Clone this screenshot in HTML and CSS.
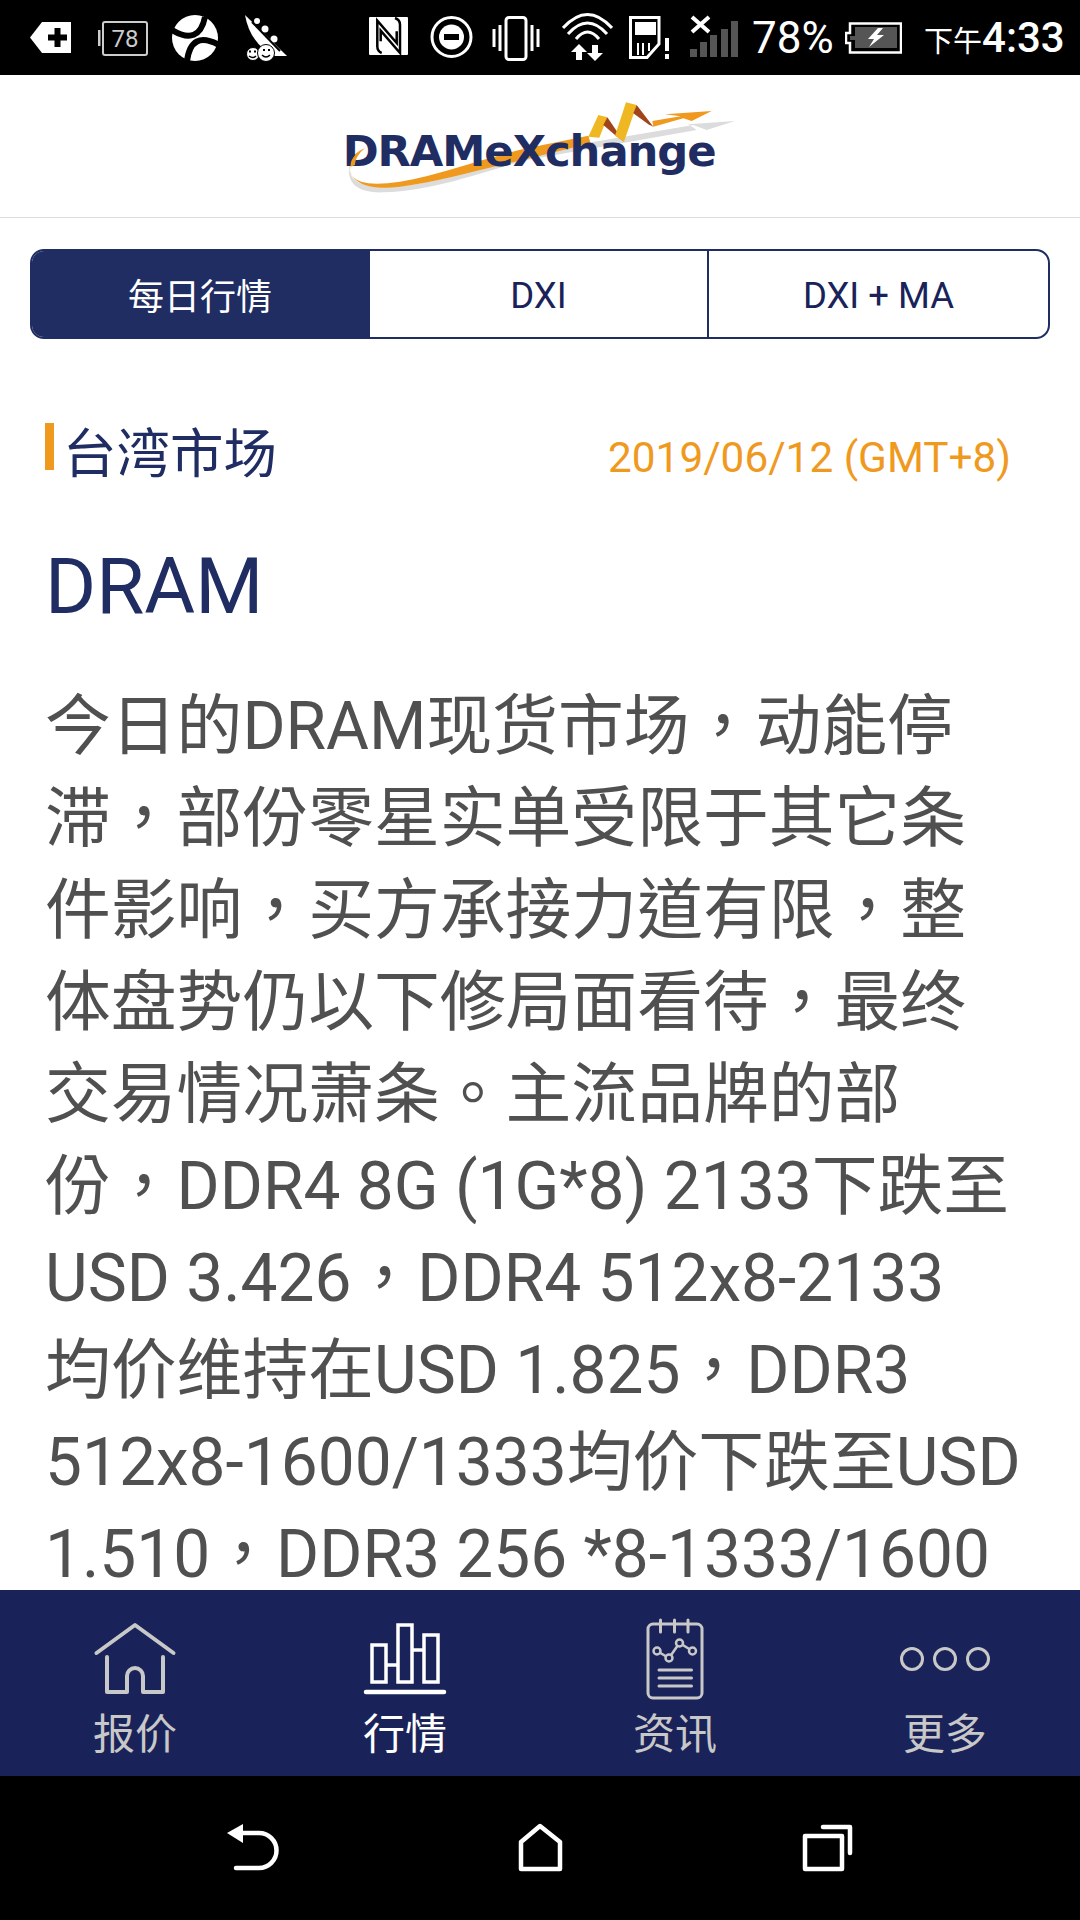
FILE: index.html
```html
<!DOCTYPE html>
<html lang="zh-TW">
<head>
    <meta charset="UTF-8">
    <meta name="viewport" content="width=device-width, initial-scale=1.0">
    <title>DRAMeXchange</title>
    <link rel="stylesheet" href="styles.css">
</head>
<body>
    <!-- Android status bar -->
    <div class="status-bar">
        <svg class="st st-tag" width="41" height="75" viewBox="0 0 41 75"><path d="M0 37.5 12 22H41V53H12Z" fill="#fff"/><path d="M18 37.5H37M27.5 28V47" stroke="#000" stroke-width="6"/></svg>
        <svg class="st st-num" width="50" height="75" viewBox="0 0 50 75"><rect x="5" y="22" width="44" height="33" rx="2" fill="none" stroke="#ccc" stroke-width="2"/><rect x="0" y="30" width="2.5" height="16" fill="#ccc"/><text x="27" y="47" class="st-num-text">78</text></svg>
        <svg class="st st-ball" width="48" height="75" viewBox="0 0 48 75"><circle cx="24" cy="38" r="23" fill="#fff"/><path d="M34 17Q28 46 1 30M48 45Q20 30 16 61" fill="none" stroke="#000" stroke-width="6"/></svg>
        <svg class="st st-pod" width="44" height="75" viewBox="0 0 44 75"><path d="M1 15 43 56H31Q6 44 1 15Z" fill="#fff"/><circle cx="13" cy="21" r="3" fill="#fff"/><circle cx="21" cy="29" r="3.500" fill="#fff"/><circle cx="30" cy="39" r="3.500" fill="#fff"/><path d="M8 22 36 51" stroke="#000" stroke-width="2"/><circle cx="9" cy="54" r="6.500" fill="#fff" stroke="#000"/><circle cx="22" cy="53" r="8.500" fill="#fff" stroke="#000"/><path d="M5 51.500H7M10 51.500H12M19 50H21M24 50H26" stroke="#000" stroke-width="2"/><path d="M18 55Q22 59 26 55M5 56Q9 59 12 56" fill="none" stroke="#000" stroke-width="1.500"/></svg>
        <svg class="st st-nfc" width="40" height="75" viewBox="0 0 40 75"><rect x="1" y="17" width="39" height="38" rx="1" fill="#fff"/><path d="M13.700 53Q9.300 51.300 9.300 46.300V20.700L28.700 43V31.300M27 18Q32 19.700 32 24.700V53L12.700 30.700V41.300" fill="none" stroke="#000" stroke-width="2.500"/></svg>
        <svg class="st st-dnd" width="43" height="75" viewBox="0 0 43 75"><circle cx="21.500" cy="37" r="19.500" fill="none" stroke="#fff" stroke-width="3"/><circle cx="21.500" cy="37" r="12.500" fill="#fff"/><rect x="14" y="34" width="15" height="6" fill="#000"/></svg>
        <svg class="st st-vib" width="48" height="75" viewBox="0 0 48 75"><rect x="14" y="17.500" width="20" height="42" rx="3" fill="none" stroke="#fff" stroke-width="3"/><path d="M2 29V47M8 25V51M40 25V51M46 29V47" stroke="#fff" stroke-width="3"/></svg>
        <svg class="st st-wifi" width="51" height="75" viewBox="0 0 51 75"><path d="M1 28Q25.500 1 50 28M6 34Q25.500 12 45 34M14 39Q25.500 25 37 39" fill="none" stroke="#fff" stroke-width="3"/><path d="M17 44 25 52H20V60H14V52H9ZM30 45H36V53H41L33 61 25 53H30Z" fill="#fff"/></svg>
        <svg class="st st-sim" width="42" height="75" viewBox="0 0 42 75"><path d="M1.500 17.500H30V44L18 57.500H1.500Z" fill="none" stroke="#fff" stroke-width="3"/><rect x="6" y="22" width="21" height="13" fill="#fff"/><path d="M9 43V55M14 43V55M20 43V51" stroke="#fff" stroke-width="2"/><path d="M38 38V51M38 54V59" stroke="#fff" stroke-width="4"/></svg>
        <svg class="st st-sig" width="48" height="75" viewBox="0 0 48 75"><path d="M0 49H7V57H0ZM10 42H17V57H10ZM20 35H27V57H20ZM31 29H38V57H31ZM41 21H48V57H41Z" fill="#555"/><path d="M2 17 19 32M19 17 2 32" stroke="#fff" stroke-width="4"/></svg>
        <div class="st-pct">78%</div>
        <svg class="st st-bat" width="57" height="75" viewBox="0 0 57 75"><path d="M5 23.500H56V52.500H5V43H1V33H5Z" fill="none" stroke="#fff" stroke-width="2.500"/><path d="M10 27H52V48H10V40H5V36H10Z" fill="#555"/><path d="M33 28 23 39H29L24 47 39 35H32L38 28Z" fill="#fff"/></svg>
        <div class="st-time"><span class="st-ampm">下午</span>4:33</div>
    </div>

    <!-- Logo -->
    <div class="logo-bar">
        <svg width="440" height="125" viewBox="0 0 1320 375">
            <path d="M88 240C78 300 120 325 190 322 350 315 470 265 620 225L1130 135 1105 118 1245 108 1160 135 1120 120 620 205C460 250 340 305 190 305 120 305 85 285 88 240Z" fill="#dcdcdc"/>
            <path d="M135 190C95 210 82 250 95 270 115 300 170 300 240 290 360 270 470 225 620 190L805 152 812 175 620 222C470 255 360 290 240 305 170 314 100 305 90 255 85 225 105 200 135 190Z" fill="#ef9a1f"/>
            <path d="M805 155 835 90 862 97 838 158Z" fill="#efb722"/>
            <path d="M862 97 912 170 885 150 850 120Z" fill="#a2441a"/>
            <path d="M885 152 918 52 950 60 912 170Z" fill="#efb722"/>
            <path d="M950 60 1000 125 985 118 940 85Z" fill="#a2441a"/>
            <path d="M997 108 1082 94 1035 88 1175 78 1115 108 1090 100 1000 125Z" fill="#ef9a1f"/>
            <text x="68" y="243" class="logo-text" textLength="1122">DRAMeXchange</text>
            <path d="M135 190C105 205 90 225 92 245L105 240C105 225 115 205 135 190Z" fill="#ef9a1f"/>
        </svg>
    </div>

    <div class="content">
        <div class="tabs">
            <div class="tab tab-active">每日行情</div>
            <div class="tab tab-mid">DXI</div>
            <div class="tab">DXI + MA</div>
        </div>

        <div class="market-row">
            <div class="market-name">台湾市场</div>
            <div class="market-date">2019/06/12 (GMT+8)</div>
        </div>

        <h1 class="product">DRAM</h1>
        <p class="report">今日的DRAM现货市场，动能停<br>滞，部份零星实单受限于其它条<br>件影响，买方承接力道有限，整<br>体盘势仍以下修局面看待，最终<br>交易情况萧条。主流品牌的部<br>份，DDR4 8G (1G*8) 2133下跌至<br>USD 3.426，DDR4 512x8-2133<br>均价维持在USD 1.825，DDR3<br>512x8-1600/1333均价下跌至USD<br>1.510，DDR3 256 *8-1333/1600</p>
    </div>

    <!-- Bottom tabs -->
    <div class="nav">
        <div class="nav-item">
            <svg width="100" height="84" viewBox="0 0 100 84" fill="none" stroke="currentColor" stroke-width="4" stroke-linecap="round" stroke-linejoin="round"><path d="M11.500 35 50 7 88.500 35"/><path d="M22 39V74H42V58A8 8 0 0 1 58 58V74H78V39"/></svg>
            <span>报价</span>
        </div>
        <div class="nav-item nav-active">
            <svg width="100" height="84" viewBox="0 0 100 84" fill="none" stroke="currentColor" stroke-width="4" stroke-linecap="round"><path d="M11 74H89" stroke-width="4.500"/><path d="M17 27H31V64H17ZM43 7H57V64H43ZM69 17H83V64H69ZM31 47H43M57 32H69" stroke-width="3.500"/></svg>
            <span>行情</span>
        </div>
        <div class="nav-item">
            <svg width="100" height="84" viewBox="0 0 100 84" fill="none" stroke="currentColor" stroke-width="3" stroke-linecap="round"><rect x="23" y="6" width="54" height="74" rx="5"/><path d="M35.500 2V14M49.500 2V14M63 2V14"/><path d="M34 52H66.500M34 60H66.500M34 68H66.500"/><path d="M32 33 44 40 54.500 25 67.500 33" stroke-width="2.500"/><g fill="#1a2359" stroke-width="2.500"><circle cx="32" cy="33" r="3.500"/><circle cx="44" cy="40" r="3.500"/><circle cx="54.500" cy="25" r="3.500"/><circle cx="67.500" cy="33" r="3.500"/></g></svg>
            <span>资讯</span>
        </div>
        <div class="nav-item">
            <svg width="100" height="84" viewBox="0 0 100 84" fill="none" stroke="currentColor" stroke-width="3"><circle cx="17" cy="41" r="10.500"/><circle cx="50" cy="41" r="10.500"/><circle cx="83" cy="41" r="10.500"/></svg>
            <span>更多</span>
        </div>
    </div>

    <!-- Android soft keys -->
    <div class="softkeys">
        <svg width="60" height="60" viewBox="0 0 60 60" fill="none" stroke="#fff" stroke-width="4.500" stroke-linecap="round"><path d="M5 15 21 6V25Z" fill="#fff" stroke="none"/><path d="M21 15H37A17.500 17.500 0 0 1 37 50H14"/></svg>
        <svg width="60" height="60" viewBox="0 0 60 60" fill="none" stroke="#fff" stroke-width="4.500" stroke-linejoin="round"><path d="M30 8 11 24V51H50V24Z"/></svg>
        <svg width="60" height="60" viewBox="0 0 60 60" fill="none" stroke="#fff" stroke-width="4.500" stroke-linecap="round" stroke-linejoin="round"><rect x="7" y="18" width="37" height="33"/><path d="M25 9H52V35"/></svg>
    </div>
</body>
</html>
```

FILE: styles.css
```css
/* General styles */
html, body {
    margin: 0;
    padding: 0;
}

body {
    width: 1080px;
    height: 1920px;
    overflow: hidden;
    display: flex;
    flex-direction: column;
    background-color: #ffffff;
    font-family: Roboto, "Noto Sans CJK TC", sans-serif;
}

/* Status bar */
.status-bar {
    height: 75px;
    flex: none;
    display: flex;
    align-items: center;
    padding-left: 30px;
    background-color: #000000;
    color: #ffffff;
}

.st {
    flex: none;
    display: block;
}

.st-num { margin-left: 27px; }
.st-ball { margin-left: 23px; }
.st-pod { margin-left: 25px; }
.st-nfc { margin-left: 80px; }
.st-dnd { margin-left: 22px; }
.st-vib { margin-left: 19px; }
.st-wifi { margin-left: 22px; }
.st-sim { margin-left: 16px; }
.st-sig { margin-left: 19px; }
.st-bat { margin-left: 14px; }

.st-num-text {
    font-family: Roboto, sans-serif;
    font-size: 24px;
    fill: #cccccc;
    text-anchor: middle;
}

.st-pct {
    margin-left: 14px;
    width: 79px;
    font-size: 44px;
}

.st-time {
    margin-left: 22px;
    font-size: 42px;
    font-weight: 500;
    white-space: nowrap;
}

.st-ampm {
    font-size: 29px;
    font-weight: 400;
}

/* Logo */
.logo-bar {
    height: 143px;
    flex: none;
    display: flex;
    justify-content: center;
    padding-top: 10px;
    box-sizing: border-box;
    border-bottom: 1px solid #dddddd;
}

.logo-text {
    font-family: "DejaVu Sans", sans-serif;
    font-weight: 700;
    font-size: 130px;
    fill: #1f2d63;
}

/* Main content */
.content {
    flex: 1;
    min-height: 0;
    overflow: hidden;
    padding: 31px 30px 0;
}

.tabs {
    display: flex;
    height: 90px;
    box-sizing: border-box;
    border: 2px solid #1f2d63;
    border-radius: 14px;
    overflow: hidden;
}

.tab {
    flex: 1;
    display: flex;
    align-items: center;
    justify-content: center;
    padding-top: 3px;
    font-size: 36.5px;
    color: #1a2359;
    border-left: 2px solid #1f2d63;
}

.tab-active {
    flex: none;
    width: 336px;
    box-sizing: border-box;
    padding-top: 0;
    font-size: 36px;
    border-left: none;
    background-color: #1f2d63;
    color: #ffffff;
}

.tab-mid {
    flex: none;
    width: 337px;
}

.market-row {
    display: flex;
    justify-content: space-between;
    margin-top: 84px;
    padding: 0 39px 0 15px;
}

.market-name {
    display: flex;
    gap: 9px;
    font-size: 53.5px;
    line-height: 64px;
    height: 60px;
    color: #1f2d63;
}

.market-name::before {
    content: "";
    width: 9px;
    height: 47px;
    background-color: #ef9a1f;
}

.market-date {
    align-self: center;
    padding-top: 8px;
    font-size: 42.3px;
    color: #ef9a1f;
}

.product {
    margin: 59px 0 0 15px;
    font-size: 78px;
    line-height: 90px;
    font-weight: 400;
    color: #1f2d63;
}

.report {
    margin: 49px 0 0 15px;
    font-size: 65.8px;
    line-height: 92px;
    white-space: nowrap;
    color: #505050;
}

/* Bottom navigation */
.nav {
    height: 186px;
    flex: none;
    display: grid;
    grid-template-columns: repeat(4, 1fr);
    box-sizing: border-box;
    padding-top: 28px;
    background-color: #1a2359;
}

.nav-item {
    display: flex;
    flex-direction: column;
    align-items: center;
    color: #c8c8c8;
    font-size: 42px;
    line-height: 46px;
}

.nav-item svg {
    display: block;
    margin-bottom: 10px;
}

.nav-active {
    color: #ffffff;
}

/* Soft keys */
.softkeys {
    height: 144px;
    flex: none;
    display: grid;
    grid-template-columns: repeat(3, 288px);
    justify-items: center;
    box-sizing: border-box;
    padding: 42px 108px 0;
    background-color: #000000;
}
```
